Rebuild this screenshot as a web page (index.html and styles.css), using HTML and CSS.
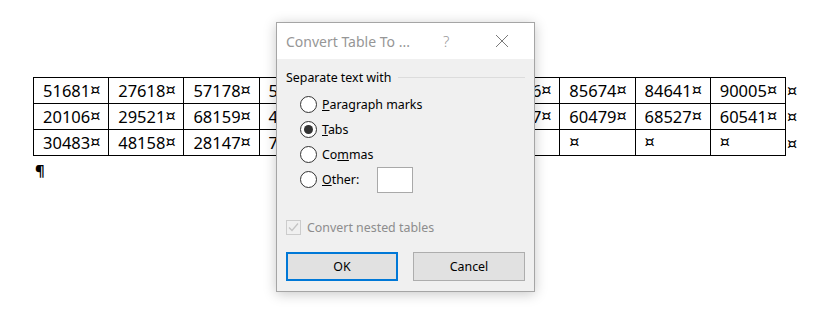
FILE: index.html
```html
<html>

<head>
  <link rel="stylesheet" href="styles.css">
</head>

<body>
  <div class="doc">
    <div class="doc-table-row">
      <table class="data-table">
        <tr>
          <td>51681<span class="cell-mark">¤</span></td>
          <td>27618<span class="cell-mark">¤</span></td>
          <td>57178<span class="cell-mark">¤</span></td>
          <td>54219<span class="cell-mark">¤</span></td>
          <td>33410<span class="cell-mark">¤</span></td>
          <td>12897<span class="cell-mark">¤</span></td>
          <td>44326<span class="cell-mark">¤</span></td>
          <td>85674<span class="cell-mark">¤</span></td>
          <td>84641<span class="cell-mark">¤</span></td>
          <td>90005<span class="cell-mark">¤</span></td>
        </tr>
        <tr class="row-tall">
          <td>20106<span class="cell-mark">¤</span></td>
          <td>29521<span class="cell-mark">¤</span></td>
          <td>68159<span class="cell-mark">¤</span></td>
          <td>40772<span class="cell-mark">¤</span></td>
          <td>15938<span class="cell-mark">¤</span></td>
          <td>73061<span class="cell-mark">¤</span></td>
          <td>52187<span class="cell-mark">¤</span></td>
          <td>60479<span class="cell-mark">¤</span></td>
          <td>68527<span class="cell-mark">¤</span></td>
          <td>60541<span class="cell-mark">¤</span></td>
        </tr>
        <tr>
          <td>30483<span class="cell-mark">¤</span></td>
          <td>48158<span class="cell-mark">¤</span></td>
          <td>28147<span class="cell-mark">¤</span></td>
          <td>71543<span class="cell-mark">¤</span></td>
          <td><span class="cell-mark">¤</span></td>
          <td><span class="cell-mark">¤</span></td>
          <td><span class="cell-mark">¤</span></td>
          <td><span class="cell-mark">¤</span></td>
          <td><span class="cell-mark">¤</span></td>
          <td><span class="cell-mark">¤</span></td>
        </tr>
      </table>
      <!-- end-of-row marks -->
      <div class="row-marks">
        <span class="row-mark">¤</span>
        <span class="row-mark row-tall-mark">¤</span>
        <span class="row-mark">¤</span>
      </div>
    </div>
    <p class="pilcrow">¶</p>
  </div>

  <!-- Convert Table To dialog, lies over the document -->
  <div class="dlg">
    <div class="dlg-title">
      <span class="dlg-title-text">Convert Table To ...</span>
      <span class="dlg-help">?</span>
      <svg class="dlg-close" width="14" height="14" viewBox="0 0 14 14">
        <path d="M1 1 L13 13 M13 1 L1 13" stroke="#7a7a7a" stroke-width="1" fill="none" />
      </svg>
    </div>

    <div class="dlg-body">
      <div class="group-head">
        <span>Separate text with</span>
        <div class="group-line"></div>
      </div>

      <div class="radio-list">
        <div class="radio-row">
          <span class="radio"></span>
          <span><u>P</u>aragraph marks</span>
        </div>
        <div class="radio-row">
          <span class="radio radio-on"><span class="radio-dot"></span></span>
          <span><u>T</u>abs</span>
        </div>
        <div class="radio-row">
          <span class="radio"></span>
          <span>Co<u>m</u>mas</span>
        </div>
        <div class="radio-row">
          <span class="radio"></span>
          <span class="other-label"><u>O</u>ther:</span>
          <span class="other-input"></span>
        </div>
      </div>

      <div class="check-row">
        <span class="checkbox">
          <svg width="13" height="13" viewBox="0 0 13 13">
            <path d="M2 6.5 L5 9.5 L11 2.5" stroke="#c4c4c4" stroke-width="1.3" fill="none" />
          </svg>
        </span>
        <span class="check-label">Convert nested tables</span>
      </div>

      <div class="btn-row">
        <div class="btn btn-default">OK</div>
        <div class="btn">Cancel</div>
      </div>
    </div>
  </div>
</body>

</html>
```

FILE: styles.css
```css
body {
  margin: 0;
  background-color: #ffffff;
  font-family: "Noto Sans", "Open Sans", sans-serif;
}

.doc {
  padding: 77px 0 0 33px;
}

.doc-table-row {
  display: flex;
  flex-direction: row;
}

.data-table {
  border-collapse: collapse;
  table-layout: fixed;
  width: 753px;
  font-size: 16.5px;
  color: #000000;
}

.data-table td {
  border: 1px solid #000000;
  height: 25px;
  padding: 2px 0 0 9px;
  white-space: nowrap;
  line-height: 20px;
}

.row-tall td {
  height: 26px;
}

.cell-mark,
.row-mark {
  font-family: "DejaVu Sans", sans-serif;
  font-size: 16px;
}

.cell-mark {
  position: relative;
  top: -2px;
}

.row-marks {
  display: flex;
  flex-direction: column;
  padding-left: 1px;
}

.row-mark {
  height: 26px;
  line-height: 28px;
}

.row-tall-mark {
  height: 27px;
}

.pilcrow {
  margin: 4px 0 0 2px;
  font-size: 15px;
  line-height: 20px;
  font-weight: bold;
}

/* dialog */
.dlg {
  position: absolute;
  left: 276px;
  top: 22px;
  width: 257px;
  border: 1px solid #a5a5a5;
  background-color: #f0f0f0;
  box-shadow: 0 2px 12px rgba(0, 0, 0, 0.22);
  font-size: 12.4px;
  color: #000000;
}

.dlg-title {
  display: flex;
  align-items: center;
  height: 36px;
  background-color: #ffffff;
  padding-left: 9px;
}

.dlg-title-text {
  color: #969696;
  font-size: 14px;
  width: 157px;
}

.dlg-help {
  color: #9a9a9a;
  font-size: 15px;
  font-weight: 300;
}

.dlg-close {
  margin-left: 46px;
}

.dlg-body {
  padding: 8px 9px 10px 9px;
}

.group-head {
  display: flex;
  align-items: center;
  height: 20px;
}

.group-line {
  flex: 1;
  height: 1px;
  background-color: #dcdcdc;
  margin-left: 7px;
}

.radio-list {
  display: flex;
  flex-direction: column;
  margin-top: 5px;
  padding-left: 14px;
}

.radio-row {
  display: flex;
  align-items: center;
  height: 25px;
}

.radio {
  width: 15px;
  height: 15px;
  border: 1px solid #333333;
  border-radius: 50%;
  background-color: #ffffff;
  margin-right: 5px;
  display: flex;
  align-items: center;
  justify-content: center;
}

.radio-dot {
  width: 9px;
  height: 9px;
  border-radius: 50%;
  background-color: #333333;
}

.other-label {
  width: 55px;
}

.other-input {
  width: 34px;
  height: 24px;
  border: 1px solid #a9a9a9;
  background-color: #ffffff;
}

.check-row {
  display: flex;
  align-items: center;
  height: 20px;
  margin-top: 25px;
}

.checkbox {
  width: 13px;
  height: 13px;
  border: 1px solid #cccccc;
  background-color: #f0f0f0;
  margin-right: 6px;
  display: flex;
}

.check-label {
  color: #8d8d8d;
}

.btn-row {
  display: flex;
  gap: 15px;
  margin-top: 15px;
}

.btn {
  width: 110px;
  height: 27px;
  border: 1px solid #adadad;
  background-color: #e1e1e1;
  display: flex;
  align-items: center;
  justify-content: center;
}

.btn-default {
  width: 108px;
  height: 25px;
  border: 2px solid #0078d7;
}
```
